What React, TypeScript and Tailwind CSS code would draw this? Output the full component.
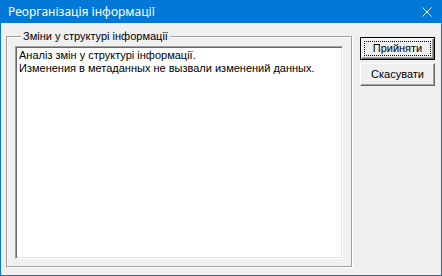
import React from 'react';

const lines = [
  'Аналіз змін у структурі інформації.',
  'Изменения в метаданных не вызвали изменений данных.',
];

const App: React.FC = () => {
  return (
    <div className="w-[442px] h-[276px] flex flex-col bg-[#f0f0f0] border border-t-0 border-[#0078d7] font-['Liberation_Sans',Arial,sans-serif] text-[11px] text-black overflow-hidden">
      <div className="h-[23px] shrink-0 bg-[#0078d7] -mx-px flex items-center justify-between pl-[8px] pr-[10px]">
        <span className="text-white text-[12px] font-['Noto_Sans',sans-serif] leading-none">Реорганізація інформації</span>
        <svg width="10" height="10" viewBox="0 0 10 10" className="shrink-0">
          <path d="M0.5 0.5 L9.5 9.5 M9.5 0.5 L0.5 9.5" stroke="#fff" strokeWidth="1" />
        </svg>
      </div>

      <div className="flex-1 flex pl-[5px] pr-[6px] pt-[7px] pb-[8px] gap-[8px]">
        <fieldset className="w-[348px] flex flex-col border border-[#a0a0a0] shadow-[inset_1px_1px_0_#fff,1px_1px_0_#fff] px-[8px] pb-[7px] pt-[3px]">
          <legend className="ml-[6px] px-[2px] bg-[#f0f0f0] leading-[13px]">Зміни у структурі інформації</legend>
          <div className="flex-1 bg-white border border-t-[#a0a0a0] border-l-[#a0a0a0] border-b-white border-r-white shadow-[inset_1px_1px_0_#696969,inset_-1px_-1px_0_#e3e3e3] px-[3px] py-[2px] leading-[13px]">
            {lines.map((line, i) => (
              <div key={i}>{line}</div>
            ))}
          </div>
        </fieldset>

        <div className="flex flex-col gap-[3px] pt-[7px]">
          <button className="w-[75px] h-[23px] border border-black bg-[#f0f0f0] shadow-[inset_1px_1px_0_#fff,inset_-1px_-1px_0_#696969,inset_-2px_-2px_0_#a0a0a0] flex items-center justify-center p-[3px]">
            <span className="w-full h-full flex items-center justify-center outline outline-1 outline-dotted outline-black -outline-offset-1">Прийняти</span>
          </button>
          <button className="w-[75px] h-[23px] bg-[#f0f0f0] border border-t-white border-l-white border-b-[#696969] border-r-[#696969] shadow-[inset_-1px_-1px_0_#a0a0a0] flex items-center justify-center">
            Скасувати
          </button>
        </div>
      </div>
    </div>
  );
};

export default App;
